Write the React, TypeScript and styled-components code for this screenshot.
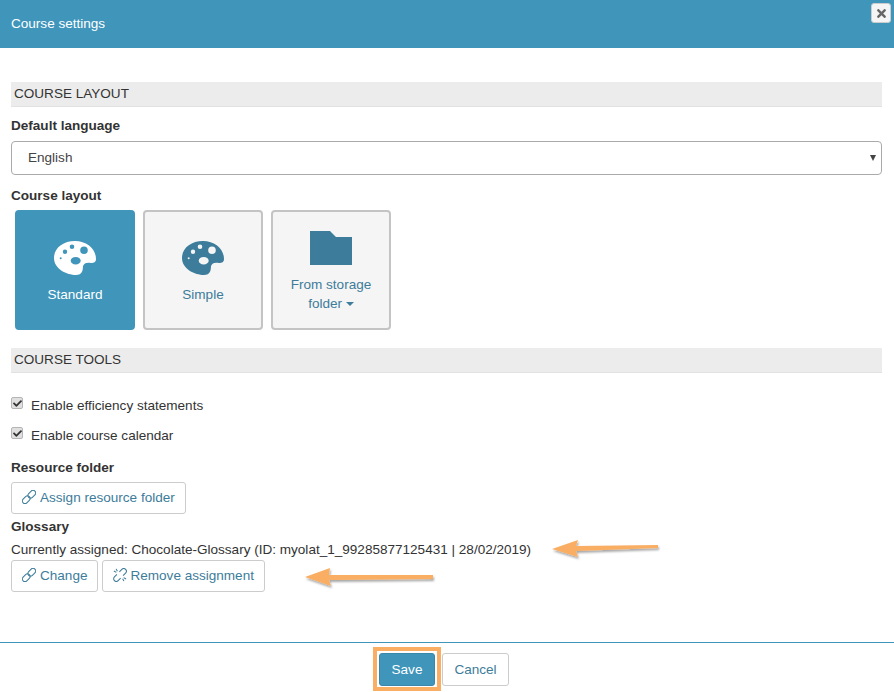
import { ReactNode } from 'react';
import styled, { createGlobalStyle } from 'styled-components';
import { FaCheck, FaTimes } from 'react-icons/fa';

const GlobalStyle = createGlobalStyle`
  html, body { margin: 0; padding: 0; background: #fff; }
  body { font-family: "Liberation Sans", Arial, sans-serif; font-size: 13.55px; color: #333; }
  * { box-sizing: border-box; }
`;

function PaletteIcon() {
  return (
    <svg width="43" height="34" viewBox="0 0 43 34">
      <path
        fillRule="evenodd"
        fill="currentColor"
        d="M0 17C0 7 9 0 21 0C33 0 42 8 42 18C42 21 40 22 37 22C33 21 30 22 29 25C29 31 27 34 22 34C13 34 0 28 0 17Z
           M21.7 16C18.9 16 16.7 17.7 16.7 19.7C16.7 21.7 18.9 23.4 21.7 23.4C24.5 23.4 26.7 21.7 26.7 19.7C26.7 17.7 24.5 16 21.7 16Z
           M30 5.5A3.8 3.8 0 1 0 30 13.1A3.8 3.8 0 1 0 30 5.5Z
           M18 3.4A2.3 2.3 0 1 0 18 8A2.3 2.3 0 1 0 18 3.4Z
           M11 8.5A2.2 2.2 0 1 0 11 12.9A2.2 2.2 0 1 0 11 8.5Z
           M6.7 16.3A1 1 0 1 0 6.7 18.3A1 1 0 1 0 6.7 16.3Z"
      />
    </svg>
  );
}

function ChainIcon() {
  return (
    <svg width="14" height="14" viewBox="0 0 16 16" fill="none" stroke="currentColor" strokeWidth="1.2">
      <g transform="rotate(-45 8 8)">
        <rect x="-1.5" y="5" width="10" height="6" rx="3" />
        <rect x="7.5" y="5" width="10" height="6" rx="3" />
      </g>
    </svg>
  );
}

function BrokenChainIcon() {
  return (
    <svg width="14" height="14" viewBox="0 0 16 16" fill="none" stroke="currentColor" strokeWidth="1.2">
      <g transform="rotate(-45 8 8)">
        <path d="M6 5H2A3 3 0 0 0 2 11H6" />
        <path d="M10 5H14A3 3 0 0 1 14 11H10" />
      </g>
      <path d="M3.5 1L5 3.8M1 3.5L3.8 5M12.5 15L11 12.2M15 12.5L12.2 11" />
    </svg>
  );
}

function LayoutCard({ active, icon, children }: { active?: boolean; icon: ReactNode; children: ReactNode }) {
  return (
    <Card $active={active}>
      <CardIcon>{icon}</CardIcon>
      <CardLabel>{children}</CardLabel>
    </Card>
  );
}

function Check({ children }: { children: ReactNode }) {
  return (
    <CheckRow>
      <CheckBox>
        <FaCheck size={9} />
      </CheckBox>
      {children}
    </CheckRow>
  );
}

export default function App() {
  return (
    <Dialog>
      <GlobalStyle />
      <Header>
        Course settings
        <CloseButton aria-label="Close">
          <FaTimes size={13} />
        </CloseButton>
      </Header>
      <Body>
        <SectionTitle>COURSE LAYOUT</SectionTitle>
        <FieldLabel>Default language</FieldLabel>
        <SelectWrap>
          <LanguageSelect defaultValue="en">
            <option value="en">English</option>
          </LanguageSelect>
          <SelectArrow />
        </SelectWrap>
        <LayoutLabel>Course layout</LayoutLabel>
        <Cards>
          <LayoutCard active icon={<PaletteIcon />}>Standard</LayoutCard>
          <LayoutCard icon={<PaletteIcon />}>Simple</LayoutCard>
          <LayoutCard
            icon={
              <svg width="42" height="34" viewBox="0 0 42 34">
                <path d="M0 0H20L26 6H42V34H0Z" fill="currentColor" />
              </svg>
            }
          >
            From storage
            <br />
            folder <Caret />
          </LayoutCard>
        </Cards>
        <ToolsTitle>COURSE TOOLS</ToolsTitle>
        <Checks>
          <Check>Enable efficiency statements</Check>
          <Check>Enable course calendar</Check>
        </Checks>
        <ResourceLabel>Resource folder</ResourceLabel>
        <Buttons>
          <LinkButton>
            <ChainIcon />
            Assign resource folder
          </LinkButton>
        </Buttons>
        <GlossaryLabel>Glossary</GlossaryLabel>
        <AssignedText>Currently assigned: Chocolate-Glossary (ID: myolat_1_99285877125431 | 28/02/2019)</AssignedText>
        <Buttons>
          <LinkButton>
            <ChainIcon />
            Change
          </LinkButton>
          <RemoveButton>
            <BrokenChainIcon />
            Remove assignment
          </RemoveButton>
        </Buttons>
      </Body>
      <Footer>
        <SaveHighlight>
          <SaveButton>Save</SaveButton>
        </SaveHighlight>
        <CancelButton>Cancel</CancelButton>
      </Footer>
      <Annotations width="894" height="692" viewBox="0 0 894 692">
        <defs>
          <filter id="arrowShadow" x="-10%" y="-50%" width="120%" height="220%">
            <feDropShadow dx="1" dy="2" stdDeviation="1" floodColor="#000" floodOpacity="0.35" />
          </filter>
        </defs>
        <path d="M552 549L578 540L576 546L658 545L658 548L576 551L578 557Z" fill="#f9ae63" filter="url(#arrowShadow)" />
        <path d="M305 577L330 568L329 575L433 575L433 579L329 580L331 586Z" fill="#f9ae63" filter="url(#arrowShadow)" />
      </Annotations>
    </Dialog>
  );
}

const Dialog = styled.div`
  position: relative;
  width: 894px;
  height: 692px;
  display: flex;
  flex-direction: column;
  overflow: hidden;
`;

const Header = styled.div`
  position: relative;
  height: 48px;
  padding: 0 11px 2px;
  display: flex;
  align-items: center;
  background: #4095bb;
  color: #fff;
`;

const CloseButton = styled.button`
  position: absolute;
  top: 3px;
  right: 3px;
  width: 20px;
  height: 20px;
  padding: 0;
  display: flex;
  align-items: center;
  justify-content: center;
  background: #f5f5f5;
  border: 1px solid #ccc;
  border-radius: 3px;
  color: #666;
`;

const Body = styled.div`
  flex: 1;
  padding: 34px 12px 0 11px;
  display: flex;
  flex-direction: column;
`;

const SectionTitle = styled.div`
  height: 25px;
  padding: 3px 3px 0;
  background: #ececec;
  border-bottom: 1px solid #e2e2e2;
  line-height: 17px;
  color: #333;
`;

const ToolsTitle = styled(SectionTitle)`
  margin-top: 18px;
`;

const FieldLabel = styled.div`
  margin-top: 11px;
  height: 17px;
  line-height: 16px;
  font-weight: 700;
`;

const LayoutLabel = styled(FieldLabel)`
  margin-top: 13px;
`;

const ResourceLabel = styled(FieldLabel)`
  margin-top: 16px;
`;

const GlossaryLabel = styled(FieldLabel)`
  margin-top: 5px;
`;

const SelectWrap = styled.div`
  position: relative;
  margin-top: 6px;
`;

const LanguageSelect = styled.select`
  display: block;
  width: 100%;
  height: 34px;
  padding: 0 16px 2px;
  appearance: none;
  background: #fff;
  border: 1px solid #aaa;
  border-radius: 4px;
  font: inherit;
  color: #444;
`;

const SelectArrow = styled.span`
  position: absolute;
  top: 14px;
  right: 6px;
  border-left: 3.5px solid transparent;
  border-right: 3.5px solid transparent;
  border-top: 6px solid #444;
`;

const Cards = styled.div`
  margin-top: 5px;
  padding-left: 4px;
  display: flex;
  gap: 8px;
`;

const Card = styled.div<{ $active?: boolean }>`
  width: 120px;
  height: 120px;
  padding-top: 4px;
  display: flex;
  flex-direction: column;
  align-items: center;
  justify-content: center;
  background: ${({ $active }) => ($active ? '#4095bb' : '#f5f5f5')};
  border: 2px solid ${({ $active }) => ($active ? '#4095bb' : '#c4c4c4')};
  border-radius: 4px;
  color: ${({ $active }) => ($active ? '#fff' : '#3d7c9a')};
  text-align: center;
`;

const CardIcon = styled.div`
  height: 34px;
  display: flex;
  align-items: center;
  justify-content: center;
`;

const CardLabel = styled.div`
  margin-top: 10px;
  line-height: 19px;
`;

const Caret = styled.span`
  display: inline-block;
  vertical-align: middle;
  border-left: 4px solid transparent;
  border-right: 4px solid transparent;
  border-top: 4px solid currentColor;
`;

const Checks = styled.div`
  margin-top: 24px;
  display: flex;
  flex-direction: column;
  gap: 13px;
`;

const CheckRow = styled.label`
  height: 17px;
  padding-bottom: 1px;
  display: flex;
  align-items: center;
  gap: 8px;
  line-height: 17px;
`;

const CheckBox = styled.span`
  width: 12px;
  height: 12px;
  margin-top: -4px;
  display: flex;
  align-items: center;
  justify-content: center;
  background: #e0e0e0;
  border: 1px solid #b5b5b5;
  border-radius: 2px;
  color: #333;
`;

const Buttons = styled.div`
  margin-top: 5px;
  display: flex;
  gap: 4px;
`;

const LinkButton = styled.button`
  height: 32px;
  padding: 0 10px 2px;
  display: inline-flex;
  align-items: center;
  gap: 4px;
  background: #fff;
  border: 1px solid #ccc;
  border-radius: 3px;
  font: inherit;
  color: #3d7c9a;
`;

const RemoveButton = styled(LinkButton)`
  gap: 3px;
`;

const AssignedText = styled.div`
  margin-top: 6px;
  height: 17px;
  line-height: 16px;
  margin-bottom: -4px;
`;

const Footer = styled.div`
  height: 50px;
  padding: 4px 12px 0 0;
  display: flex;
  justify-content: center;
  align-items: flex-start;
  gap: 1px;
  border-top: 1px solid #4095bb;
`;

const SaveHighlight = styled.div`
  width: 68px;
  height: 44px;
  padding: 2px;
  border: 4px solid #f9ae63;
`;

const SaveButton = styled.button`
  display: block;
  width: 56px;
  height: 33px;
  padding: 0;
  background: #4095bb;
  border: 1px solid #3a87a9;
  border-radius: 3px;
  font: inherit;
  color: #fff;
`;

const CancelButton = styled.button`
  width: 67px;
  height: 33px;
  margin-top: 6px;
  padding: 0;
  background: #fff;
  border: 1px solid #ccc;
  border-radius: 3px;
  font: inherit;
  color: #3d7c9a;
`;

const Annotations = styled.svg`
  position: absolute;
  top: 0;
  left: 0;
  pointer-events: none;
`;
